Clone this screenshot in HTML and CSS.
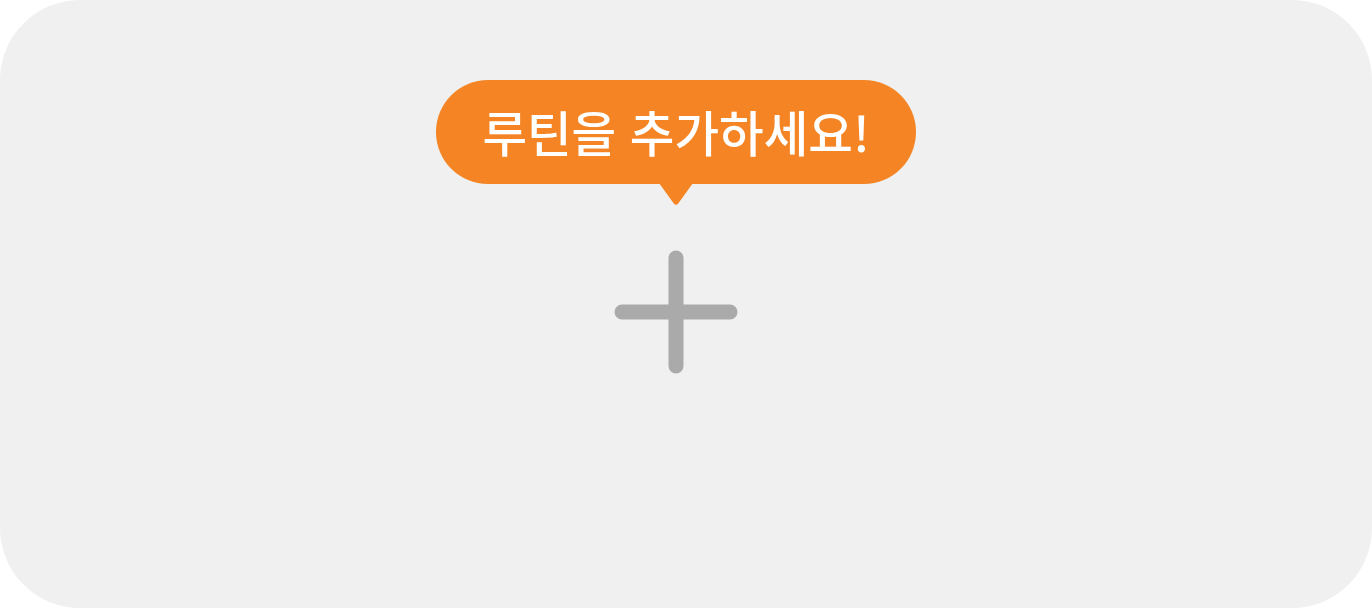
FILE: index.html
```html
<!DOCTYPE html>
<html lang="ko">
<head>
<meta charset="utf-8">
<title>루틴 추가</title>
<link rel="stylesheet" href="styles.css">
</head>
<body>
<div class="card">
  <div class="stack">
    <div class="bubble">
      <span class="bubble-text">루틴을 추가하세요!</span>
      <svg class="pointer" width="34" height="22" viewBox="0 0 34 22" aria-hidden="true">
        <path d="M0 0 H34 L19.2 20.6 Q17 23 14.8 20.6 Z" fill="#f48424"/>
      </svg>
    </div>
    <button class="add" type="button" aria-label="루틴 추가">
      <svg width="124" height="124" viewBox="0 0 124 124">
        <path d="M62 8 V116 M8 62 H116" stroke="#aaaaaa" stroke-width="15" stroke-linecap="round" fill="none"/>
      </svg>
    </button>
  </div>
</div>
</body>
</html>
```

FILE: styles.css
```css
html, body {
  margin: 0;
  padding: 0;
  background: #ffffff;
}

body {
  font-family: "Noto Sans CJK KR", "Noto Sans", sans-serif;
}

.card {
  box-sizing: border-box;
  width: 1372px;
  height: 608px;
  border-radius: 80px;
  background: #f0f0f0;
  padding: 80px 20px 0 0;
  display: flex;
  justify-content: center;
}

.stack {
  display: flex;
  flex-direction: column;
  align-items: center;
}

.bubble {
  position: relative;
  width: 480px;
  height: 104px;
  border-radius: 52px;
  background: #f48424;
  display: flex;
  align-items: center;
  justify-content: center;
}

.bubble-text {
  color: #ffffff;
  font-size: 48.5px;
  font-weight: 500;
  line-height: 1;
  letter-spacing: 0;
  margin-top: -2px;
}

.pointer {
  position: absolute;
  left: 223px;
  top: 103px;
  display: block;
}

.add {
  margin-top: 66px;
  padding: 0;
  border: 0;
  background: transparent;
  width: 124px;
  height: 124px;
  cursor: pointer;
}

.add svg {
  display: block;
}
```
